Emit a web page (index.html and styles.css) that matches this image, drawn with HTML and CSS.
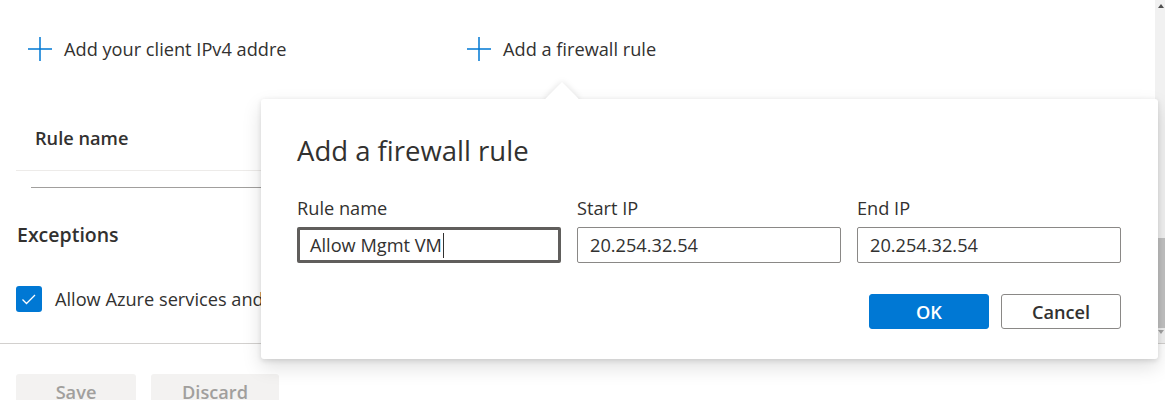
FILE: index.html
```html
<!DOCTYPE html>
<html lang="en">
<head>
<meta charset="utf-8">
<title>Networking - Firewall rules</title>
<link rel="stylesheet" href="styles.css">
</head>
<body>
<div class="page">
  <div class="scroll-area">
    <div class="content">
      <div class="toolbar">
        <a class="tool-link tool-link-clip">
          <svg class="plus" width="24" height="24" viewBox="0 0 24 24"><path d="M12 0V24M0 12H24" stroke="#0078d4" stroke-width="1.5" fill="none"/></svg>
          <span>Add your client IPv4 address (20.254.32.54)</span>
        </a>
        <a class="tool-link">
          <svg class="plus" width="24" height="24" viewBox="0 0 24 24"><path d="M12 0V24M0 12H24" stroke="#0078d4" stroke-width="1.5" fill="none"/></svg>
          <span>Add a firewall rule</span>
        </a>
      </div>
      <div class="rules-table">
        <div class="rules-head"><span class="col-head">Rule name</span></div>
        <div class="rules-line"></div>
      </div>
      <h2 class="section-title">Exceptions</h2>
      <div class="check-row">
        <span class="checkbox"><svg width="26" height="26" viewBox="0 0 26 26"><path d="M6.5 13.5L10.5 17.5L19 9" stroke="#fff" stroke-width="1.3" fill="none"/></svg></span>
        <span class="check-label">Allow Azure services and resources to access this server</span>
      </div>
    </div>
    <div class="scrollbar">
      <div class="sb-arrow"><svg width="6" height="4" viewBox="0 0 6 4"><path d="M0 4L3 0L6 4Z" fill="#505050"/></svg></div>
      <div class="sb-track"><div class="sb-thumb"></div></div>
      <div class="sb-arrow sb-arrow-down"><svg width="6" height="4" viewBox="0 0 6 4"><path d="M0 0L3 4L6 0Z" fill="#a3a3a3"/></svg></div>
    </div>
  </div>
  <div class="footer">
    <button class="btn-disabled btn-save">Save</button>
    <button class="btn-disabled btn-discard">Discard</button>
  </div>

  <div class="callout">
    <div class="beak"></div>
    <div class="callout-main">
      <div class="callout-title">Add a firewall rule</div>
      <div class="field-grid">
        <div class="field">
          <div class="field-label">Rule name</div>
          <div class="text-input text-input-focused"><span>Allow Mgmt VM</span><span class="caret"></span></div>
        </div>
        <div class="field">
          <div class="field-label">Start IP</div>
          <div class="text-input"><span>20.254.32.54</span></div>
        </div>
        <div class="field">
          <div class="field-label">End IP</div>
          <div class="text-input"><span>20.254.32.54</span></div>
        </div>
      </div>
      <div class="callout-actions">
        <button class="btn btn-primary">OK</button>
        <button class="btn btn-default">Cancel</button>
      </div>
    </div>
    <div class="beak-curtain"></div>
  </div>
</div>
</body>
</html>
```

FILE: styles.css
```css
* { box-sizing: border-box; }
html, body {
  margin: 0;
  padding: 0;
  background: #ffffff;
}
body {
  width: 1165px;
  height: 400px;
  overflow: hidden;
  font-family: "Open Sans", "Noto Sans", sans-serif;
  font-size: 18.2px;
  line-height: 24px;
  color: #323130;
}
.page {
  position: relative;
  width: 1165px;
  height: 400px;
  display: flex;
  flex-direction: column;
}
.scroll-area {
  height: 344px;
  display: flex;
  border-bottom: 1px solid #d2d0ce;
}
.content {
  flex: 1;
  min-width: 0;
}
.toolbar {
  display: flex;
  align-items: center;
  padding: 37px 0 0 28px;
  height: 61px;
}
.tool-link {
  display: flex;
  align-items: center;
  gap: 12px;
  white-space: nowrap;
  color: #323130;
}
.tool-link-clip {
  width: 259px;
  overflow: hidden;
  margin-right: 180px;
}
.plus { flex: none; display: block; }

.rules-table {
  margin: 45px 0 0 16px;
}
.rules-head {
  padding: 20px 0 20px 19px;
  border-bottom: 1px solid #edebe9;
  height: 65px;
}
.col-head {
  font-weight: 600;
}
.rules-line {
  margin: 16px 0 0 15px;
  height: 1px;
  background: #a19f9d;
}
.section-title {
  margin: 34px 0 0 17px;
  font-size: 19.5px;
  line-height: 26px;
  font-weight: 600;
}
.check-row {
  display: flex;
  align-items: center;
  gap: 13px;
  margin: 38px 0 0 16px;
  white-space: nowrap;
}
.checkbox {
  width: 26px;
  height: 26px;
  border-radius: 3px;
  background: #0078d4;
  display: block;
  flex: none;
}
.checkbox svg { display: block; }

.scrollbar {
  width: 10px;
  flex: none;
  background: #f1f1f1;
  display: flex;
  flex-direction: column;
}
.sb-arrow {
  height: 12px;
  display: flex;
  align-items: center;
  justify-content: center;
  padding-left: 1px;
}
.sb-arrow svg { display: block; }
.sb-arrow-down {
  height: 16px;
  align-items: flex-start;
  padding-top: 2px;
}
.sb-track {
  flex: 1;
}
.sb-thumb {
  margin: 226px 0 0 2px;
  height: 90px;
  background: #c1c1c1;
}

.footer {
  display: flex;
  gap: 15px;
  padding: 30px 16px 0;
}
.btn-disabled {
  height: 35px;
  border: none;
  border-radius: 3px;
  background: #f3f2f1;
  color: #a19f9d;
  font-family: inherit;
  font-size: 18.2px;
  font-weight: 600;
  line-height: 24px;
  padding: 0;
}
.btn-save { width: 120px; }
.btn-discard { width: 128px; }

.callout {
  position: absolute;
  left: 261px;
  top: 99px;
  width: 897px;
  height: 260px;
  z-index: 10;
}
.beak, .beak-curtain {
  position: absolute;
  left: 289px;
  top: -12px;
  width: 24px;
  height: 24px;
  background: #ffffff;
  transform: rotate(45deg);
}
.beak {
  box-shadow: 0 0 7px rgba(0, 0, 0, 0.13);
}
.beak-curtain {
  z-index: 2;
  clip-path: polygon(0 0, 100% 0, 0 100%);
}
.callout-main {
  position: relative;
  z-index: 1;
  height: 100%;
  background: #ffffff;
  border-radius: 3px;
  box-shadow: 0 8px 19px rgba(0, 0, 0, 0.13), 0 1.6px 5px rgba(0, 0, 0, 0.11);
  padding: 34px 37px 30px 36px;
}
.callout-title {
  font-size: 27.5px;
  line-height: 36px;
  font-weight: 400;
}
.field-grid {
  display: grid;
  grid-template-columns: 264px 264px 264px;
  column-gap: 16px;
  margin-top: 27px;
}
.field-label {
  line-height: 24px;
  margin-bottom: 7px;
}
.text-input {
  height: 36px;
  border: 1px solid #8a8886;
  border-radius: 2px;
  padding: 0 12px;
  display: flex;
  align-items: center;
  white-space: nowrap;
}
.text-input-focused {
  border: 3px solid #605e5c;
  padding: 0 10px;
}
.caret {
  display: block;
  width: 1px;
  height: 25px;
  background: #323130;
  margin-left: 1px;
}
.callout-actions {
  display: flex;
  justify-content: flex-end;
  gap: 12px;
  margin-top: 31px;
}
.btn {
  width: 120px;
  height: 35px;
  border-radius: 3px;
  font-family: inherit;
  font-size: 18.2px;
  font-weight: 600;
  line-height: 24px;
  padding: 0;
}
.btn-primary {
  background: #0078d4;
  border: 1px solid #0078d4;
  color: #ffffff;
}
.btn-default {
  background: #ffffff;
  border: 1px solid #8a8886;
  color: #323130;
}
```
